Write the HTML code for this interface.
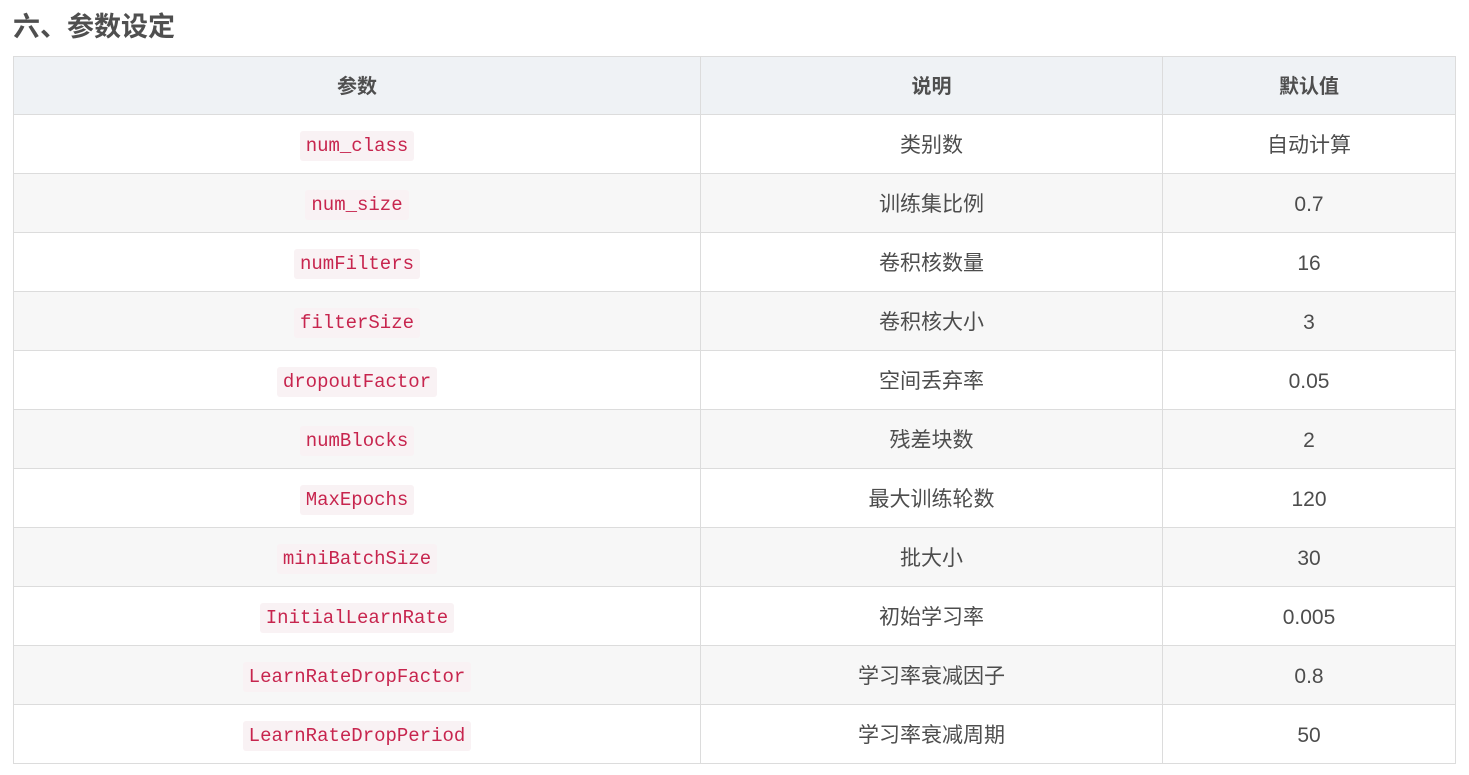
<!DOCTYPE html>
<html><head><meta charset="utf-8"><style>
body{margin:0;background:#fff;font-family:"Liberation Sans","Noto Sans CJK SC",sans-serif;color:#4d4d4d;}
h3{position:absolute;left:13px;top:8px;margin:0;font-size:27px;font-weight:bold;color:#4f4f4f;line-height:38px;}
table{position:absolute;left:13px;top:56px;border-collapse:collapse;width:1443px;font-size:21px;}
th,td{border:1px solid #dcdcdc;text-align:center;padding:3px 0 0 0;vertical-align:middle;line-height:24px;box-sizing:border-box;}
th{background:#eff2f5;height:58px;font-weight:bold;color:#4f4f4f;font-size:20px;}
td{height:59px;}
tr:nth-child(odd) td{background:#f7f7f7;}
code{font-family:"Liberation Mono",monospace;font-size:19px;color:#c7254e;background:#f9f2f4;padding:4px 6px;border-radius:3px;}
</style></head><body>
<h3>六、参数设定</h3>
<table>
<tr><th style="width:687px">参数</th><th style="width:462px">说明</th><th>默认值</th></tr>
<tr><td><code>num_class</code></td><td>类别数</td><td>自动计算</td></tr>
<tr><td><code>num_size</code></td><td>训练集比例</td><td>0.7</td></tr>
<tr><td><code>numFilters</code></td><td>卷积核数量</td><td>16</td></tr>
<tr><td><code>filterSize</code></td><td>卷积核大小</td><td>3</td></tr>
<tr><td><code>dropoutFactor</code></td><td>空间丢弃率</td><td>0.05</td></tr>
<tr><td><code>numBlocks</code></td><td>残差块数</td><td>2</td></tr>
<tr><td><code>MaxEpochs</code></td><td>最大训练轮数</td><td>120</td></tr>
<tr><td><code>miniBatchSize</code></td><td>批大小</td><td>30</td></tr>
<tr><td><code>InitialLearnRate</code></td><td>初始学习率</td><td>0.005</td></tr>
<tr><td><code>LearnRateDropFactor</code></td><td>学习率衰减因子</td><td>0.8</td></tr>
<tr><td><code>LearnRateDropPeriod</code></td><td>学习率衰减周期</td><td>50</td></tr>
</table>
</body></html>
